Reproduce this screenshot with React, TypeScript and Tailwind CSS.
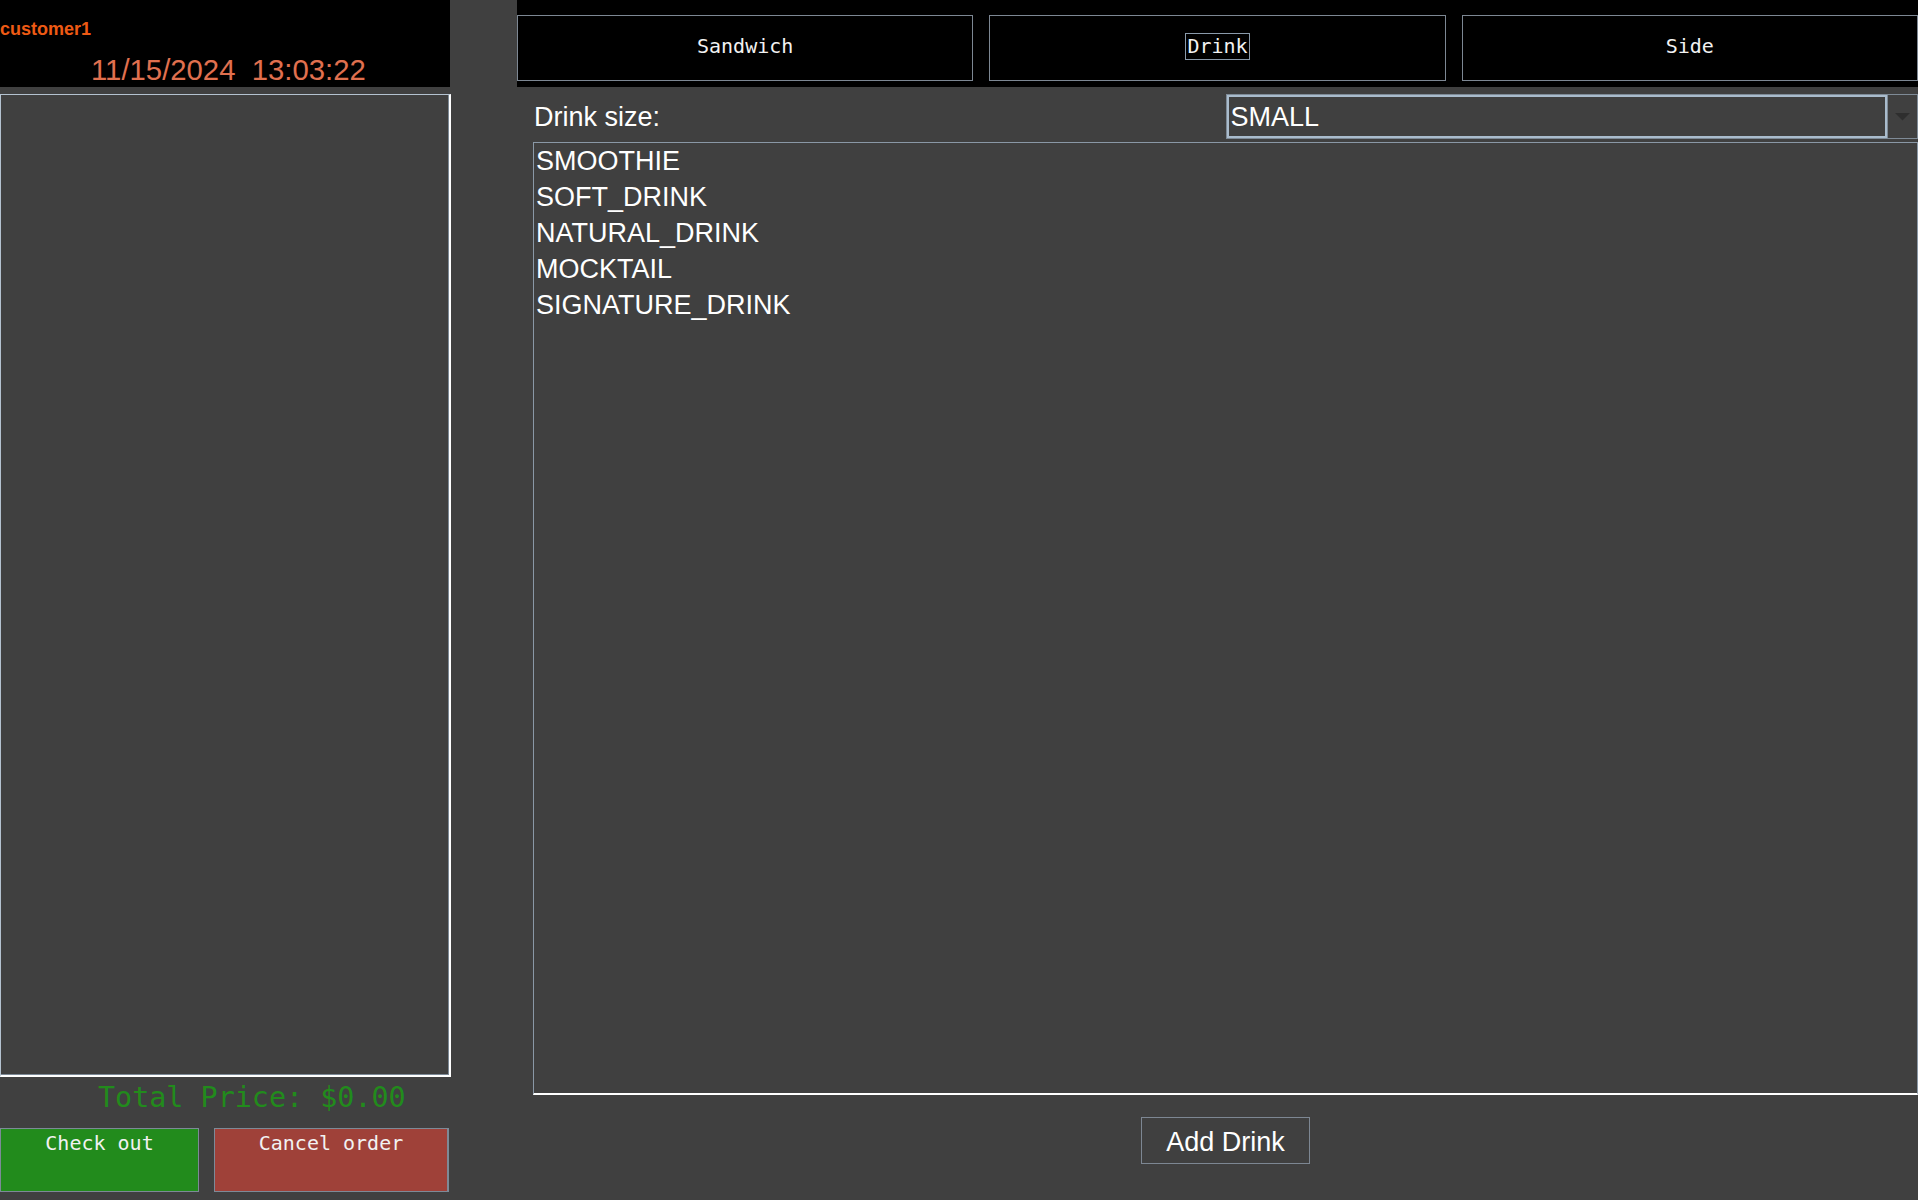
import React, { useState } from "react";

const mono = "font-['DejaVu_Sans_Mono',monospace]";
const sans = "font-['Liberation_Sans',Arial,sans-serif]";

const tabs = ["Sandwich", "Drink", "Side"];
const drinks = ["SMOOTHIE", "SOFT_DRINK", "NATURAL_DRINK", "MOCKTAIL", "SIGNATURE_DRINK"];

export default function App() {
  const [active, setActive] = useState("Drink");
  const [size] = useState("SMALL");

  return (
    <div className="flex h-[1200px] w-[1918px] overflow-hidden bg-[#404040]">
      {/* left: order summary */}
      <div className="flex w-[451px] shrink-0 flex-col">
        <div className="h-[87px] w-[450px] bg-black">
          <div className={`${sans} pt-[20px] text-[18px] font-bold leading-none text-[#ee5a14]`}>
            customer1
          </div>
          <div
            className={`${sans} mt-[17px] whitespace-pre pl-[91px] text-[29.3px] leading-none text-[#e0704f]`}
          >
            11/15/2024  13:03:22
          </div>
        </div>

        <div className="mt-[7px] h-[983px] border-t border-l border-r-2 border-b-2 border-t-[#b4c2d0] border-l-[#b4c2d0] border-r-white border-b-white bg-[#404040]">
          <div className="h-full w-full border-r border-b border-[#7d8a97]" />
        </div>

        <div className="h-[51px] pt-[7px]">
          <div className={`${mono} whitespace-pre pl-[98px] text-[28.4px] leading-none text-[#228b1c]`}>
            Total Price: $0.00
          </div>
        </div>

        <div className="flex h-[64px]">
          <button
            className={`${mono} flex h-full w-[199px] items-start justify-center border border-[#7d8a97] bg-[#228b1c] pt-[4px] text-[20px] leading-none text-[#f2f2f2]`}
          >
            Check out
          </button>
          <button
            className={`${mono} ml-[15px] flex h-full w-[235px] items-start justify-center border border-r-2 border-[#7d8a97] bg-[#9f4139] pt-[4px] text-[20px] leading-none text-[#f2f2f2]`}
          >
            Cancel order
          </button>
        </div>
      </div>

      {/* right: menu */}
      <div className="flex min-w-0 flex-1 flex-col">
        <div className="ml-[66px] h-[87px] bg-black pt-[15px]">
          <div className="grid h-[66px] grid-cols-3 gap-[16px]">
            {tabs.map((t) => (
              <button
                key={t}
                onClick={() => setActive(t)}
                className={`${mono} flex items-center justify-center border border-[#7d8793] bg-black pb-[4px] text-[20px] text-[#f2f2f2]`}
              >
                {active === t ? (
                  <span className="border border-[#8a9aaa] px-[1px] leading-[25px]">{t}</span>
                ) : (
                  <span className="leading-[25px]">{t}</span>
                )}
              </button>
            ))}
          </div>
        </div>

        <div className="flex flex-1 flex-col pl-[82px] pt-[7px]">
          <div className="grid h-[45px] grid-cols-2">
            <div className={`${sans} flex items-center pl-[1px] pt-[2px] text-[27px] leading-none text-white`}>
              Drink size:
            </div>
            <div className="flex h-[45px] border border-[#7f8b97]">
              <div
                className={`${sans} flex flex-1 items-center border-2 border-[#aabccd] pl-[2px] pt-[2px] text-[27px] leading-none text-white`}
              >
                {size}
              </div>
              <div className="flex w-[30px] items-center justify-center border-l border-[#7f8b97]">
                <svg width="15" height="8" viewBox="0 0 15 8">
                  <path d="M0 0 L15 0 L7.5 7.5 Z" fill="#2e2e2e" />
                </svg>
              </div>
            </div>
          </div>

          <div className="mt-[3px] h-[953px] border-t border-l border-r border-b-2 border-t-[#8a98a6] border-l-[#8a98a6] border-r-[#8a98a6] border-b-white pl-[2px]">
            {drinks.map((d) => (
              <div key={d} className={`${sans} h-[36px] text-[27px] leading-[36px] text-white`}>
                {d}
              </div>
            ))}
          </div>

          <div className="mt-[22px] flex justify-center">
            <button
              className={`${sans} flex h-[47px] w-[169px] items-center justify-center border border-[#7d8793] pt-[3px] text-[27px] leading-none text-white`}
            >
              Add Drink
            </button>
          </div>
        </div>
      </div>
    </div>
  );
}
